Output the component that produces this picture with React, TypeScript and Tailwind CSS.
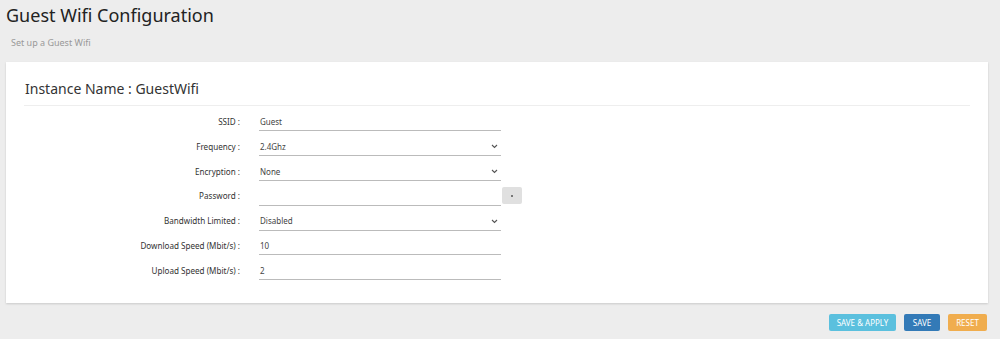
import React from "react";

const Chevron = () => (
  <svg width="7" height="5" viewBox="0 0 7 5" className="shrink-0">
    <path d="M1 1 L3.5 3.5 L6 1" fill="none" stroke="#555" strokeWidth="1.1" />
  </svg>
);

type Row = { label: string; value: string; kind: "text" | "select" | "password" };

const rows: Row[] = [
  { label: "SSID :", value: "Guest", kind: "text" },
  { label: "Frequency :", value: "2.4Ghz", kind: "select" },
  { label: "Encryption :", value: "None", kind: "select" },
  { label: "Password :", value: "", kind: "password" },
  { label: "Bandwidth Limited :", value: "Disabled", kind: "select" },
  { label: "Download Speed (Mbit/s) :", value: "10", kind: "text" },
  { label: "Upload Speed (Mbit/s) :", value: "2", kind: "text" },
];

export default function App() {
  return (
    <div
      className="w-full h-[339px] bg-[#ededed] pl-[6px] pr-[12px] overflow-hidden text-[#333]"
      style={{ fontFamily: '"Noto Sans", "Open Sans", sans-serif' }}
    >
      <div className="pt-[3px] text-[18px] leading-[24px] text-[#222]">Guest Wifi Configuration</div>
      <div className="mt-[10px] pl-[5px] text-[9px] leading-[12px] text-[#999]">Set up a Guest Wifi</div>
      <div className="mt-[13px] h-[241px] bg-white shadow-[0_1px_2px_rgba(0,0,0,0.15)] px-[18px] pt-[17px]">
        <div className="text-[14px] leading-[20px] pb-[6px] border-b border-[#eee] pl-[1px] text-[#333]">
          Instance Name : GuestWifi
        </div>
        <div className="pt-[3.6px]">
          {rows.map((r) => (
            <div key={r.label} className="flex items-center h-[24.8px]">
              <div className="w-[216px] text-right text-[8.1px] leading-[12px] text-[#333]">{r.label}</div>
              <div className="ml-[19px] flex items-center">
                <div className="w-[242px] h-[18px] border-b border-[#bbb] flex items-center justify-between pl-[1px] pr-[3px] mt-[1px]">
                  <span className="text-[8px] leading-[10px] text-[#444]">{r.value}</span>
                  {r.kind === "select" && <Chevron />}
                </div>
                {r.kind === "password" && (
                  <div className="ml-[1px] w-[20px] h-[17px] bg-[#e0e0e0] rounded-[2px] flex items-center justify-center mt-[-1px]">
                    <div className="w-[2px] h-[2px] rounded-full bg-[#555]" />
                  </div>
                )}
              </div>
            </div>
          ))}
        </div>
      </div>
      <div className="mt-[11px] flex justify-end gap-[8px] pr-[1px]">
        <div className="w-[67px] h-[17px] bg-[#5bc0de] rounded-[2px] text-white text-[8px] flex items-center justify-center">
          SAVE &amp; APPLY
        </div>
        <div className="w-[36px] h-[17px] bg-[#337ab7] rounded-[2px] text-white text-[8px] flex items-center justify-center">
          SAVE
        </div>
        <div className="w-[39px] h-[17px] bg-[#f0ad4e] rounded-[2px] text-white text-[8px] flex items-center justify-center">
          RESET
        </div>
      </div>
    </div>
  );
}
